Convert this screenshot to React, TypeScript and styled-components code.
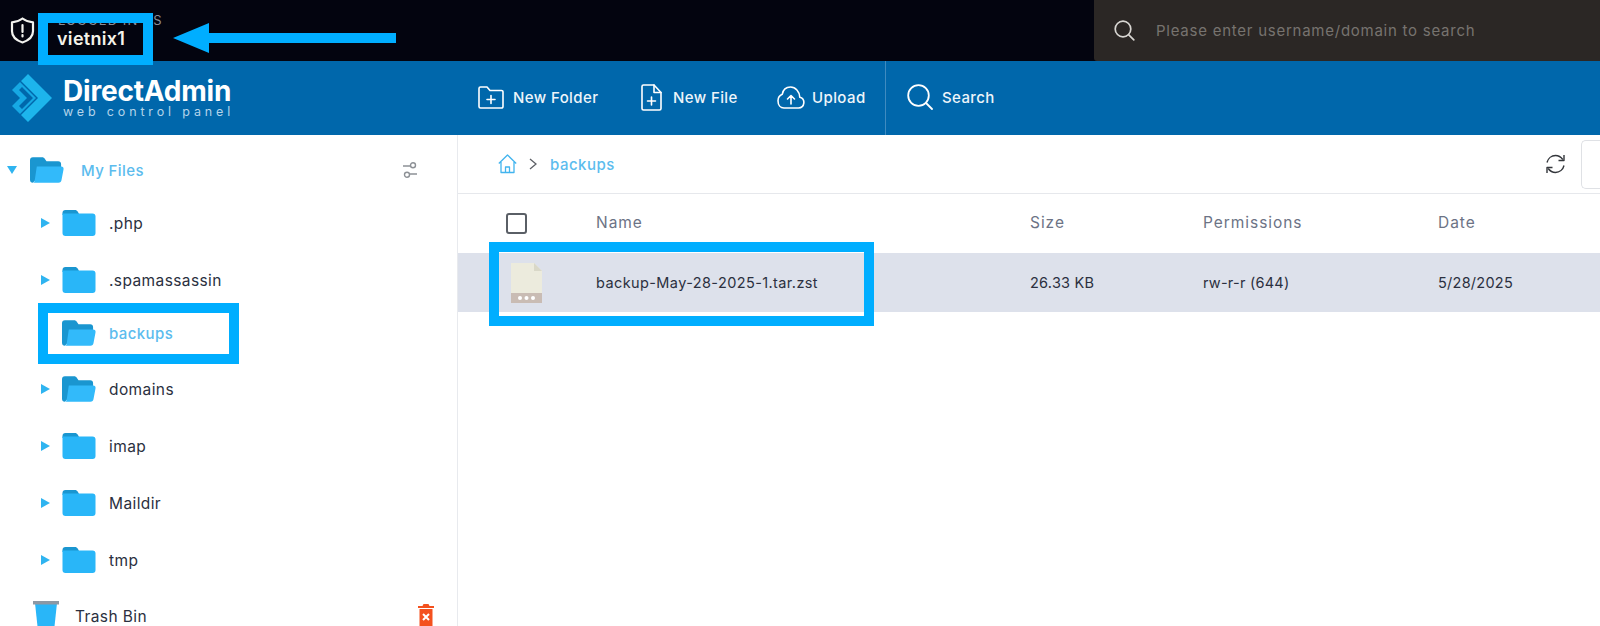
import React from "react";
import styled, { createGlobalStyle } from "styled-components";

const GlobalStyle = createGlobalStyle`
  html, body {
    margin: 0;
    padding: 0;
    background: #fff;
  }
  body {
    font-family: "Inter", "Liberation Sans", sans-serif;
  }
`;

const Page = styled.div`
  width: 1600px;
  height: 626px;
  overflow: hidden;
  display: flex;
  flex-direction: column;
`;

const TopBar = styled.div`
  height: 61px;
  flex: none;
  background: #03040f;
  display: flex;
  align-items: stretch;
  position: relative;
`;

const UserBlock = styled.div`
  display: flex;
  align-items: center;
  padding-left: 10px;
  gap: 22px;
`;

const UserText = styled.div`
  display: flex;
  flex-direction: column;
  gap: 2px;
`;

const UserLabel = styled.div`
  font-size: 13px;
  color: #8a8c96;
  letter-spacing: 1.1px;
  line-height: 14px;
  padding-left: 1px;
`;

const UserName = styled.div`
  font-size: 18px;
  font-weight: 600;
  letter-spacing: 0.3px;
  color: #f5f3ea;
  line-height: 20px;
`;

const NameCallout = styled.div`
  position: absolute;
  left: 38px;
  top: 13px;
  width: 115px;
  height: 52px;
  box-sizing: border-box;
  border: 10px solid #00aeff;
`;

const CalloutArrow = styled.svg`
  position: absolute;
  left: 173px;
  top: 23px;
`;

const GlobalSearch = styled.div`
  margin-left: auto;
  width: 506px;
  background: #2b2725;
  border-bottom-left-radius: 3px;
  display: flex;
  align-items: center;
  padding-left: 20px;
  gap: 21px;
  box-sizing: border-box;
  font-size: 15px;
  color: #77736f;
  letter-spacing: 0.75px;
`;

const ToolBar = styled.div`
  height: 74px;
  flex: none;
  background: #0067ab;
  display: flex;
  align-items: stretch;
  color: #fff;
`;

const Logo = styled.div`
  width: 478px;
  flex: none;
  display: flex;
  align-items: center;
  padding-left: 12px;
  box-sizing: border-box;
  gap: 11px;
`;

const LogoText = styled.div`
  display: flex;
  flex-direction: column;
`;

const LogoName = styled.div`
  font-size: 28px;
  font-weight: 700;
  line-height: 28px;
  letter-spacing: -0.2px;
`;

const LogoTag = styled.div`
  font-size: 12.5px;
  line-height: 14px;
  letter-spacing: 3.85px;
  color: #b4d4ea;
  white-space: nowrap;
`;

const ToolButton = styled.div<{ $w: number; $gap: number }>`
  width: ${(p) => p.$w}px;
  flex: none;
  display: flex;
  align-items: center;
  gap: ${(p) => p.$gap}px;
  padding-bottom: 2px;
  box-sizing: border-box;
  font-size: 15px;
  font-weight: 500;
  letter-spacing: 0.4px;
  color: #eef5fa;
`;

const ToolDivider = styled.div`
  width: 1px;
  background: #3f8bc0;
  margin-right: 21px;
`;

const Body = styled.div`
  flex: 1;
  display: flex;
  min-height: 0;
`;

const Sidebar = styled.div`
  width: 457px;
  flex: none;
  border-right: 1px solid #e8eaee;
  padding-top: 22px;
`;

const TreeHead = styled.div`
  height: 26px;
  display: flex;
  align-items: center;
  padding: 0 40px 0 7px;
`;

const TreeRow = styled.div<{ $gap?: number }>`
  height: 26px;
  margin-top: ${(p) => p.$gap ?? 31}px;
  display: flex;
  align-items: center;
  padding-left: 41px;
  position: relative;
`;

const TrashRow = styled.div`
  height: 26px;
  margin-top: 30px;
  display: flex;
  align-items: center;
  padding: 0 23px 0 33px;
`;

const Caret = styled.svg<{ $hidden?: boolean }>`
  flex: none;
  margin-right: 12px;
  visibility: ${(p) => (p.$hidden ? "hidden" : "visible")};
`;

const HeadCaret = styled.svg`
  flex: none;
  margin-right: 13px;
`;

const FolderIcon = styled.svg`
  flex: none;
  margin-right: 13px;
`;

const HeadFolder = styled.svg`
  flex: none;
  margin-right: 17px;
`;

const TreeLabel = styled.span<{ $active?: boolean }>`
  font-size: ${(p) => (p.$active ? 15 : 15.5)}px;
  letter-spacing: ${(p) => (p.$active ? 0.4 : 0.4)}px;
  color: ${(p) => (p.$active ? "#5cbcee" : "#2b3040")};
  font-weight: ${(p) => (p.$active ? 500 : 400)};
`;

const SideIcon = styled.svg`
  margin-left: auto;
  flex: none;
`;

const TrashIcon = styled.svg`
  flex: none;
  margin-right: 16px;
`;

const RowCallout = styled.div`
  position: absolute;
  left: 38px;
  top: -17px;
  width: 201px;
  height: 61px;
  box-sizing: border-box;
  border: 10px solid #00aeff;
`;

const Main = styled.div`
  flex: 1;
  min-width: 0;
`;

const Breadcrumb = styled.div`
  height: 59px;
  box-sizing: border-box;
  border-bottom: 1px solid #e6e8ec;
  display: flex;
  align-items: center;
  padding-left: 40px;
  gap: 12px;
`;

const CrumbText = styled.span`
  font-size: 15px;
  font-weight: 500;
  color: #5cbcee;
  letter-spacing: 0.5px;
  margin-left: 1px;
`;

const CrumbTools = styled.div`
  margin-left: auto;
  display: flex;
  align-items: center;
  gap: 15px;
`;

const ViewButton = styled.div`
  width: 18px;
  height: 47px;
  border: 1px solid #dfe1e5;
  border-right: none;
  border-radius: 5px 0 0 5px;
`;

const TableGrid = styled.div`
  display: grid;
  grid-template-columns: 138px 434px 173px 235px 1fr;
  align-items: center;
`;

const TableHead = styled(TableGrid)`
  height: 59px;
`;

const HeadCell = styled.span`
  font-size: 15.5px;
  font-weight: 400;
  letter-spacing: 0.95px;
  color: #6c7385;
  margin-bottom: 3px;
`;

const TableRow = styled(TableGrid)`
  height: 59px;
  background: #dde1eb;
  font-size: 14.5px;
  letter-spacing: 0.25px;
  color: #2b3040;
  position: relative;
`;

const FileName = styled.span`
  letter-spacing: 0.4px;
`;

const Checkbox = styled.div`
  width: 21px;
  height: 21px;
  box-sizing: border-box;
  border: 2px solid #5a5f66;
  border-radius: 3px;
  margin-left: 48px;
`;

const FileIcon = styled.svg`
  display: block;
  margin-left: 53px;
`;

const FileCallout = styled.div`
  position: absolute;
  left: 31px;
  top: -11px;
  width: 385px;
  height: 84px;
  box-sizing: border-box;
  border: 10px solid #00aeff;
`;

const closedFolder = (
  <>
    <path d="M3 0h9.500c1.200 0 2 .6 2.700 1.500L17 5H0V3a3 3 0 0 1 3-3z" fill="#1a96d0" />
    <path d="M0 3.500h30a3 3 0 0 1 3 3V23a3 3 0 0 1-3 3H3a3 3 0 0 1-3-3z" fill="#29b6f8" />
  </>
);

const openFolder = (
  <>
    <path d="M3 0h9.500c1.200 0 2 .6 2.700 1.500L17 4H29a3 3 0 0 1 3 3v4L5 24l-2 2a3 3 0 0 1-3-3V3a3 3 0 0 1 3-3z" fill="#1a96d0" />
    <path d="M7 9.500h25a2.600 2.600 0 0 1 2.500 3L32.500 23a3.400 3.400 0 0 1-3.300 3H3c1 0 1.600-.8 1.800-2L7 9.500z" fill="#32bafa" />
  </>
);

const FOLDERS = [
  { name: ".php", gap: 27 },
  { name: ".spamassassin" },
  { name: "backups", active: true, gap: 27 },
  { name: "domains", open: true, gap: 30 },
  { name: "imap" },
  { name: "Maildir" },
  { name: "tmp" },
];

export default function App() {
  return (
    <Page>
      <GlobalStyle />
      <TopBar>
        <UserBlock>
          <svg width="25" height="27" viewBox="0 0 25 27" fill="none" stroke="#f2f2ee" strokeWidth="2.200" strokeLinejoin="round">
            <path d="M12.500 1.500c3 2.400 6.300 3.500 10.500 3.800v9c0 5.200-4 9-10.500 11.200C6 23.300 2 19.500 2 14.300v-9C6.200 5 9.500 3.900 12.500 1.500z" />
            <path d="M12.500 8v7M12.500 18v1.500" strokeLinecap="round" />
          </svg>
          <UserText>
            <UserLabel>LOGGED IN AS</UserLabel>
            <UserName>vietnix1</UserName>
          </UserText>
        </UserBlock>
        <NameCallout />
        <CalloutArrow width="224" height="30" viewBox="0 0 224 30">
          <path d="M0 15 36 0v10h187v10H36v10z" fill="#00aeff" />
        </CalloutArrow>
        <GlobalSearch>
          <svg width="21" height="21" viewBox="0 0 21 21" fill="none" stroke="#d8d6d2" strokeWidth="1.700" strokeLinecap="round">
            <circle cx="9" cy="9" r="7.800" />
            <path d="m14.800 14.800 5 5" />
          </svg>
          Please enter username/domain to search
        </GlobalSearch>
      </TopBar>

      <ToolBar>
        <Logo>
          <svg width="40" height="48" viewBox="0 0 40 48" fill="#1db5ec">
            <path d="M16 0 40 24 16 48l-7-7 17-17L9 7z" />
            <path d="M0 16l8-8 16 16-16 16-8-8 8-8z" fill="#16a8e4" />
            <path d="M7 16l8 8-8 8 3 3 11-11L10 13z" fill="#0067ab" />
          </svg>
          <LogoText>
            <LogoName>DirectAdmin</LogoName>
            <LogoTag>web control panel</LogoTag>
          </LogoText>
        </Logo>
        <ToolButton $w={163} $gap={9}>
          <svg width="26" height="23" viewBox="0 0 26 23" fill="none" stroke="#fff" strokeWidth="1.600" strokeLinejoin="round" strokeLinecap="round">
            <path d="M2.500 1H9l3 3.500h11.500A1.500 1.500 0 0 1 25 6v14.500a1.500 1.500 0 0 1-1.500 1.500h-21A1.500 1.500 0 0 1 1 20.500v-18A1.500 1.500 0 0 1 2.500 1z" />
            <path d="M13 9.500v8M9 13.500h8" />
          </svg>
          New Folder
        </ToolButton>
        <ToolButton $w={136} $gap={11}>
          <svg width="21" height="27" viewBox="0 0 21 27" fill="none" stroke="#fff" strokeWidth="1.600" strokeLinejoin="round" strokeLinecap="round">
            <path d="M2.500 1H13l7 7.500v16A1.500 1.500 0 0 1 18.500 26h-16A1.500 1.500 0 0 1 1 24.500v-22A1.500 1.500 0 0 1 2.500 1z" />
            <path d="M13 1v7.500h7M10.500 13v8M6.500 17h8" />
          </svg>
          New File
        </ToolButton>
        <ToolButton $w={108} $gap={7}>
          <svg width="28" height="23" viewBox="0 0 28 23" fill="none" stroke="#fff" strokeWidth="1.600" strokeLinejoin="round" strokeLinecap="round">
            <path d="M7 22h14.500a5.500 5.500 0 0 0 1.300-10.800C22.500 5.500 18.500 1 13.500 1 9 1 6 4 5.300 8.200 2.500 9.300 1 11.800 1 14.800 1 19 3.500 22 7 22z" />
            <path d="M14 18V9.500M10.500 13 14 9.500l3.500 3.500" />
          </svg>
          Upload
        </ToolButton>
        <ToolDivider />
        <ToolButton $w={120} $gap={9}>
          <svg width="26" height="26" viewBox="0 0 26 26" fill="none" stroke="#fff" strokeWidth="1.800" strokeLinecap="round">
            <circle cx="11.500" cy="11.500" r="10.300" />
            <path d="m19 19 6 6" />
          </svg>
          Search
        </ToolButton>
      </ToolBar>

      <Body>
        <Sidebar>
          <TreeHead>
            <HeadCaret width="10" height="8" viewBox="0 0 10 8">
              <path d="M0 0h10L5 8z" fill="#2fb4f0" />
            </HeadCaret>
            <HeadFolder width="34" height="26" viewBox="0 0 35 26">{openFolder}</HeadFolder>
            <TreeLabel $active>My Files</TreeLabel>
            <SideIcon width="14" height="16" viewBox="0 0 14 16" fill="none" stroke="#8d9196" strokeWidth="1.400">
              <circle cx="10" cy="3.200" r="2.500" />
              <circle cx="4" cy="12.800" r="2.500" />
              <path d="M0 4h7M7 12h7" />
            </SideIcon>
          </TreeHead>
          {FOLDERS.map((f) => (
            <TreeRow key={f.name} $gap={f.gap}>
              <Caret width="9" height="10" viewBox="0 0 9 10" $hidden={f.active}>
                <path d="M0 0l9 5-9 5z" fill="#2fb4f0" />
              </Caret>
              <FolderIcon width="34" height="26" viewBox={f.active || f.open ? "0 0 35 26" : "0 0 33 26"}>
                {f.active || f.open ? openFolder : closedFolder}
              </FolderIcon>
              <TreeLabel $active={f.active}>{f.name}</TreeLabel>
              {f.active && <RowCallout />}
            </TreeRow>
          ))}
          <TrashRow>
            <TrashIcon width="26" height="30" viewBox="0 0 26 30">
              <path d="M2 2h22l-3 28H5z" fill="#29b6f8" />
              <path d="M0 0h26v3.500H0z" fill="#8c98a4" />
            </TrashIcon>
            <TreeLabel>Trash Bin</TreeLabel>
            <SideIcon width="16" height="24" viewBox="0 0 16 24">
              <path d="M5.500 0h5l1 2H16v2H0V2h4.500z" fill="#f4511e" />
              <path d="M1.500 5h13v19h-13z" fill="#f4511e" />
              <path d="m5 10 6 6M11 10l-6 6" stroke="#fff" strokeWidth="2" />
            </SideIcon>
          </TrashRow>
        </Sidebar>

        <Main>
          <Breadcrumb>
            <svg width="19" height="20" viewBox="0 0 19 20" fill="none" stroke="#42b4ee" strokeWidth="1.300" strokeLinejoin="round">
              <path d="M.8 9.500 9.500 1l8.700 8.500M3 8v10.500h13V8" />
              <path d="M7.500 18.500V13h4v5.500" />
            </svg>
            <svg width="8" height="12" viewBox="0 0 8 12" fill="none" stroke="#5d6066" strokeWidth="1.300">
              <path d="m1 1 6 5-6 5" />
            </svg>
            <CrumbText>backups</CrumbText>
            <CrumbTools>
              <svg width="21" height="20" viewBox="0 0 21 20" fill="none" stroke="#33363b" strokeWidth="1.400">
                <path d="M2 8.500C3 4.300 6.500 1.500 10.500 1.500c3 0 5.500 1.500 7.300 4" />
                <path d="M19 1v5.500h-5.500" strokeLinejoin="round" />
                <path d="M19 11.500c-1 4.200-4.500 7-8.500 7-3 0-5.500-1.500-7.300-4" />
                <path d="M2 19v-5.500h5.500" strokeLinejoin="round" />
              </svg>
              <ViewButton />
            </CrumbTools>
          </Breadcrumb>

          <TableHead>
            <Checkbox />
            <HeadCell>Name</HeadCell>
            <HeadCell>Size</HeadCell>
            <HeadCell>Permissions</HeadCell>
            <HeadCell>Date</HeadCell>
          </TableHead>
          <TableRow>
            <FileIcon width="31" height="40" viewBox="0 0 31 40">
              <path d="M0 0h23l8 8v22H0z" fill="#ecebdd" />
              <path d="M23 0l8 8h-8z" fill="#d9d8c8" />
              <path d="M0 30h31v10H0z" fill="#c9bcb4" />
              <circle cx="9" cy="35" r="2" fill="#fff" />
              <circle cx="15.500" cy="35" r="2" fill="#fff" />
              <circle cx="22" cy="35" r="2" fill="#fff" />
            </FileIcon>
            <FileName>backup-May-28-2025-1.tar.zst</FileName>
            <span>26.33 KB</span>
            <span>rw-r-r (644)</span>
            <span>5/28/2025</span>
            <FileCallout />
          </TableRow>
        </Main>
      </Body>
    </Page>
  );
}
